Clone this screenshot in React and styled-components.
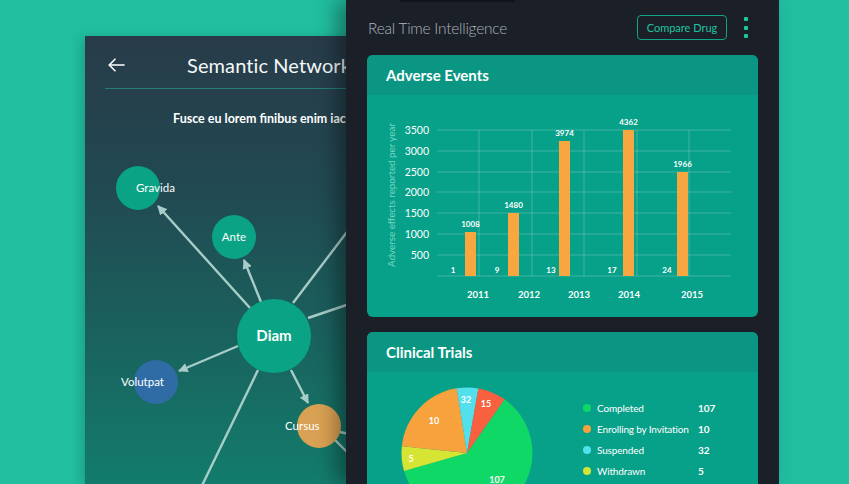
import styled, { createGlobalStyle } from "styled-components";

const GlobalStyle = createGlobalStyle`
  html, body { margin: 0; padding: 0; }
  body {
    background: #21bea0;
    font-family: Lato, "Open Sans", sans-serif;
    overflow: hidden;
  }
`;

const Stage = styled.div`
  display: flex;
  align-items: flex-start;
  height: 484px;
  padding-left: 85px;
  overflow: hidden;
  box-sizing: border-box;
`;

/* ---------- left screen: semantic network ---------- */

const NetworkScreen = styled.section`
  flex: 0 0 370px;
  height: 448px;
  margin-top: 36px;
  margin-right: -109px;
  background: linear-gradient(180deg, #283b49 0%, #214a52 35%, #19645f 70%, #127c6c 100%);
  box-shadow: -3px 2px 10px rgba(0, 0, 0, 0.18);
  color: #fff;
  overflow: hidden;
`;

const NetworkHeader = styled.header`
  display: flex;
  align-items: center;
  height: 53px;
  box-sizing: border-box;
  padding: 5px 0 0 3px;
  margin: 0 20px;
  border-bottom: 1px solid #237f77;
`;

const ScreenTitle = styled.h1`
  margin: 0 0 0 62px;
  font-size: 20px;
  font-weight: 400;
  letter-spacing: 0.1px;
  color: #f4f8f8;
`;

const Subtitle = styled.p`
  margin: 22px 0 0;
  padding-left: 88px;
  font-size: 12.5px;
  line-height: 16px;
  font-weight: 700;
  white-space: nowrap;
`;

const Graph = styled.svg`
  display: block;
  margin-top: 13px;
  width: 370px;
  height: 344px;
`;

/* ---------- right screen: real time intelligence ---------- */

const IntelScreen = styled.section`
  flex: 0 0 433px;
  height: 484px;
  position: relative;
  z-index: 1;
  display: flex;
  flex-direction: column;
  background: #1b2028;
  box-shadow: -10px 0 18px rgba(0, 0, 0, 0.35);
`;

const Notch = styled.div`
  position: absolute;
  top: 0;
  left: 54px;
  width: 115px;
  height: 2px;
  background: #11151a;
`;

const TopBar = styled.header`
  display: flex;
  align-items: center;
  height: 55px;
  flex-shrink: 0;
  padding: 0 31px 0 22px;
`;

const IntelTitle = styled.h2`
  margin: 0;
  font-size: 15.5px;
  font-weight: 300;
  letter-spacing: -0.25px;
  color: #aab4bd;
`;

const OutlineButton = styled.button`
  margin-left: auto;
  width: 90px;
  height: 25px;
  border: 1.5px solid #11a386;
  border-radius: 4px;
  background: transparent;
  color: #21c3a1;
  font-family: inherit;
  font-size: 11px;
  padding: 0;
`;

const Kebab = styled.div`
  display: flex;
  flex-direction: column;
  gap: 4.5px;
  margin-left: 17px;
  span {
    width: 4px;
    height: 4px;
    border-radius: 1px;
    background: #1ec7a2;
  }
`;

const Card = styled.article`
  margin: 0 21px;
  border-radius: 6px;
  overflow: hidden;
  background: #07a089;
  flex-shrink: 0;
  height: ${(p) => p.$height || "auto"};
  & + & {
    margin-top: 15px;
  }
`;

const CardHead = styled.h3`
  margin: 0;
  height: 40px;
  display: flex;
  align-items: center;
  padding-left: 19px;
  font-size: 15px;
  font-weight: 700;
  color: #fff;
  background: #0a9682;
`;

const ChartSvg = styled.svg`
  display: block;
  width: 391px;
  height: 222px;
`;

const TrialsBody = styled.div`
  display: flex;
  align-items: flex-start;
  height: 160px;
`;

const PieSvg = styled.svg`
  display: block;
  flex: 0 0 200px;
  height: 160px;
`;

const Legend = styled.ul`
  list-style: none;
  margin: 29px 0 0 16px;
  padding: 0;
  display: flex;
  flex-direction: column;
  gap: 7px;
`;

const LegendRow = styled.li`
  display: grid;
  grid-template-columns: 8px 95px auto;
  column-gap: 6px;
  align-items: center;
  height: 14px;
  color: #fff;
  font-size: 10px;
  letter-spacing: -0.15px;
`;

const Dot = styled.span`
  width: 8px;
  height: 8px;
  border-radius: 50%;
  background: ${(p) => p.$color};
`;

const LegendValue = styled.span`
  font-weight: 700;
  letter-spacing: 0;
`;

/* ---------- data ---------- */

const nodes = [
  { label: "Gravida", x: 53, y: 48, r: 22, color: "#0aa385", tx: 51, anchor: "start" },
  { label: "Ante", x: 149, y: 97, r: 22, color: "#0aa385", tx: 149, anchor: "middle" },
  { label: "Volutpat", x: 71, y: 242, r: 22, color: "#2f6ca6", tx: 36, anchor: "start" },
  { label: "Cursus", x: 234, y: 286, r: 22, color: "#d9a153", tx: 200, anchor: "start" },
];

const arrows = [
  [165, 168, 73, 66],
  [176, 162, 159, 120],
  [153, 206, 94, 231],
  [206, 230, 223, 263],
];

const plainEdges = [
  [208, 163, 300, 42],
  [223, 178, 300, 152],
  [173, 230, 110, 360],
  [255, 292, 290, 300],
  [250, 300, 285, 335],
];

const yTicks = [3500, 3000, 2500, 2000, 1500, 1000, 500];
const gridY = [35, 56, 77, 97, 118, 139, 160, 181];
const gridX = [112, 165, 217, 270, 322];

const bars = [
  { year: 2011, small: 1, value: 1008, x: 98, top: 137, sx: 86, yx: 111 },
  { year: 2012, small: 9, value: 1480, x: 141, top: 118, sx: 130, yx: 162 },
  { year: 2013, small: 13, value: 3974, x: 192, top: 46, sx: 184, yx: 212 },
  { year: 2014, small: 17, value: 4362, x: 256, top: 35, sx: 245, yx: 262 },
  { year: 2015, small: 24, value: 1966, x: 310, top: 77, sx: 300, yx: 325 },
];

const slices = [
  { from: 35, to: 254, color: "#10d867", label: "107", lx: 130, ly: 111 },
  { from: 254, to: 276, color: "#d6e433", label: "5", lx: 44, ly: 90 },
  { from: 276, to: 351, color: "#f7a23d", label: "10", lx: 67, ly: 52 },
  { from: 351, to: 370, color: "#52e1ec", label: "32", lx: 99, ly: 31 },
  { from: 370, to: 395, color: "#f8603f", label: "15", lx: 119, ly: 35 },
];

const legend = [
  { name: "Completed", value: 107, color: "#10d867" },
  { name: "Enrolling by Invitation", value: 10, color: "#f7a23d" },
  { name: "Suspended", value: 32, color: "#52e1ec" },
  { name: "Withdrawn", value: 5, color: "#d6e433" },
];

function arcPath(cx, cy, r, from, to) {
  const rad = (d) => (d * Math.PI) / 180;
  const x1 = cx + r * Math.sin(rad(from));
  const y1 = cy - r * Math.cos(rad(from));
  const x2 = cx + r * Math.sin(rad(to));
  const y2 = cy - r * Math.cos(rad(to));
  const large = to - from > 180 ? 1 : 0;
  return `M${cx} ${cy} L${x1} ${y1} A${r} ${r} 0 ${large} 1 ${x2} ${y2} Z`;
}

function BackArrow() {
  return (
    <svg width="17" height="14" viewBox="0 0 17 14" fill="none" stroke="#fff" strokeWidth="1.6" strokeLinecap="round" strokeLinejoin="round">
      <path d="M16 7H1.5" />
      <path d="M7 1.2 1.2 7 7 12.8" />
    </svg>
  );
}

function NetworkGraph() {
  return (
    <Graph viewBox="0 0 370 344">
      <defs>
        <marker id="tip" viewBox="0 0 10 10" refX="9" refY="5" markerWidth="4" markerHeight="4" orient="auto-start-reverse">
          <path d="M0 0 L10 5 L0 10 Z" fill="#a7cdc8" />
        </marker>
      </defs>
      {plainEdges.map(([x1, y1, x2, y2], i) => (
        <line key={i} x1={x1} y1={y1} x2={x2} y2={y2} stroke="#a7cdc8" strokeWidth="2.4" />
      ))}
      {arrows.map(([x1, y1, x2, y2], i) => (
        <line key={i} x1={x1} y1={y1} x2={x2} y2={y2} stroke="#a7cdc8" strokeWidth="2.4" markerEnd="url(#tip)" />
      ))}
      <circle cx="189" cy="196" r="37" fill="#0aa385" />
      <text x="189" y="201" textAnchor="middle" fill="#fff" fontSize="15" fontWeight="700">
        Diam
      </text>
      {nodes.map((n) => (
        <g key={n.label}>
          <circle cx={n.x} cy={n.y} r={n.r} fill={n.color} />
          <text x={n.tx} y={n.y + 4} textAnchor={n.anchor} fill="#fff" fontSize="11.5">
            {n.label}
          </text>
        </g>
      ))}
    </Graph>
  );
}

function AdverseChart() {
  return (
    <ChartSvg viewBox="0 0 391 222">
      {gridY.map((y) => (
        <line key={y} x1="70" x2="364" y1={y} y2={y} stroke="rgba(255,255,255,0.22)" strokeWidth="1" />
      ))}
      {gridX.map((x) => (
        <line key={x} x1={x} x2={x} y1="35" y2="181" stroke="rgba(255,255,255,0.22)" strokeWidth="1" />
      ))}
      {yTicks.map((t, i) => (
        <text key={t} x="62" y={gridY[i] + 3.5} textAnchor="end" fill="#fff" fontSize="10.5">
          {t}
        </text>
      ))}
      <text transform="translate(28 100) rotate(-90)" textAnchor="middle" fill="#78d6c3" fontSize="9.8">
        Adverse effects reported per year
      </text>
      {bars.map((b) => (
        <g key={b.year}>
          <rect x={b.x} y={b.top} width="11" height={181 - b.top} fill="#f8a63f" />
          <text x={b.x + 5.5} y={b.top - 5} textAnchor="middle" fill="#fff" fontSize="8" fontWeight="700">
            {b.value}
          </text>
          <text x={b.sx} y="177.5" textAnchor="middle" fill="#fff" fontSize="8" fontWeight="700">
            {b.small}
          </text>
          <text x={b.yx} y="203" textAnchor="middle" fill="#fff" fontSize="9.5" fontWeight="700">
            {b.year}
          </text>
        </g>
      ))}
    </ChartSvg>
  );
}

function TrialsPie() {
  return (
    <PieSvg viewBox="0 0 200 160">
      {slices.map((s) => (
        <path key={s.label} d={arcPath(100, 81, 65.5, s.from, s.to)} fill={s.color} />
      ))}
      {slices.map((s) => (
        <text key={s.label} x={s.lx} y={s.ly} textAnchor="middle" fill="#fff" fontSize="9" fontWeight="700">
          {s.label}
        </text>
      ))}
    </PieSvg>
  );
}

export default function App() {
  return (
    <>
      <GlobalStyle />
      <Stage>
        <NetworkScreen>
          <NetworkHeader>
            <BackArrow />
            <ScreenTitle>Semantic Network</ScreenTitle>
          </NetworkHeader>
          <Subtitle>Fusce eu lorem finibus enim iaculis</Subtitle>
          <NetworkGraph />
        </NetworkScreen>

        <IntelScreen>
          <Notch />
          <TopBar>
            <IntelTitle>Real Time Intelligence</IntelTitle>
            <OutlineButton>Compare Drug</OutlineButton>
            <Kebab>
              <span />
              <span />
              <span />
            </Kebab>
          </TopBar>

          <Card $height="262px">
            <CardHead>Adverse Events</CardHead>
            <AdverseChart />
          </Card>

          <Card $height="200px">
            <CardHead>Clinical Trials</CardHead>
            <TrialsBody>
              <TrialsPie />
              <Legend>
                {legend.map((l) => (
                  <LegendRow key={l.name}>
                    <Dot $color={l.color} />
                    <span>{l.name}</span>
                    <LegendValue>{l.value}</LegendValue>
                  </LegendRow>
                ))}
              </Legend>
            </TrialsBody>
          </Card>
        </IntelScreen>
      </Stage>
    </>
  );
}
